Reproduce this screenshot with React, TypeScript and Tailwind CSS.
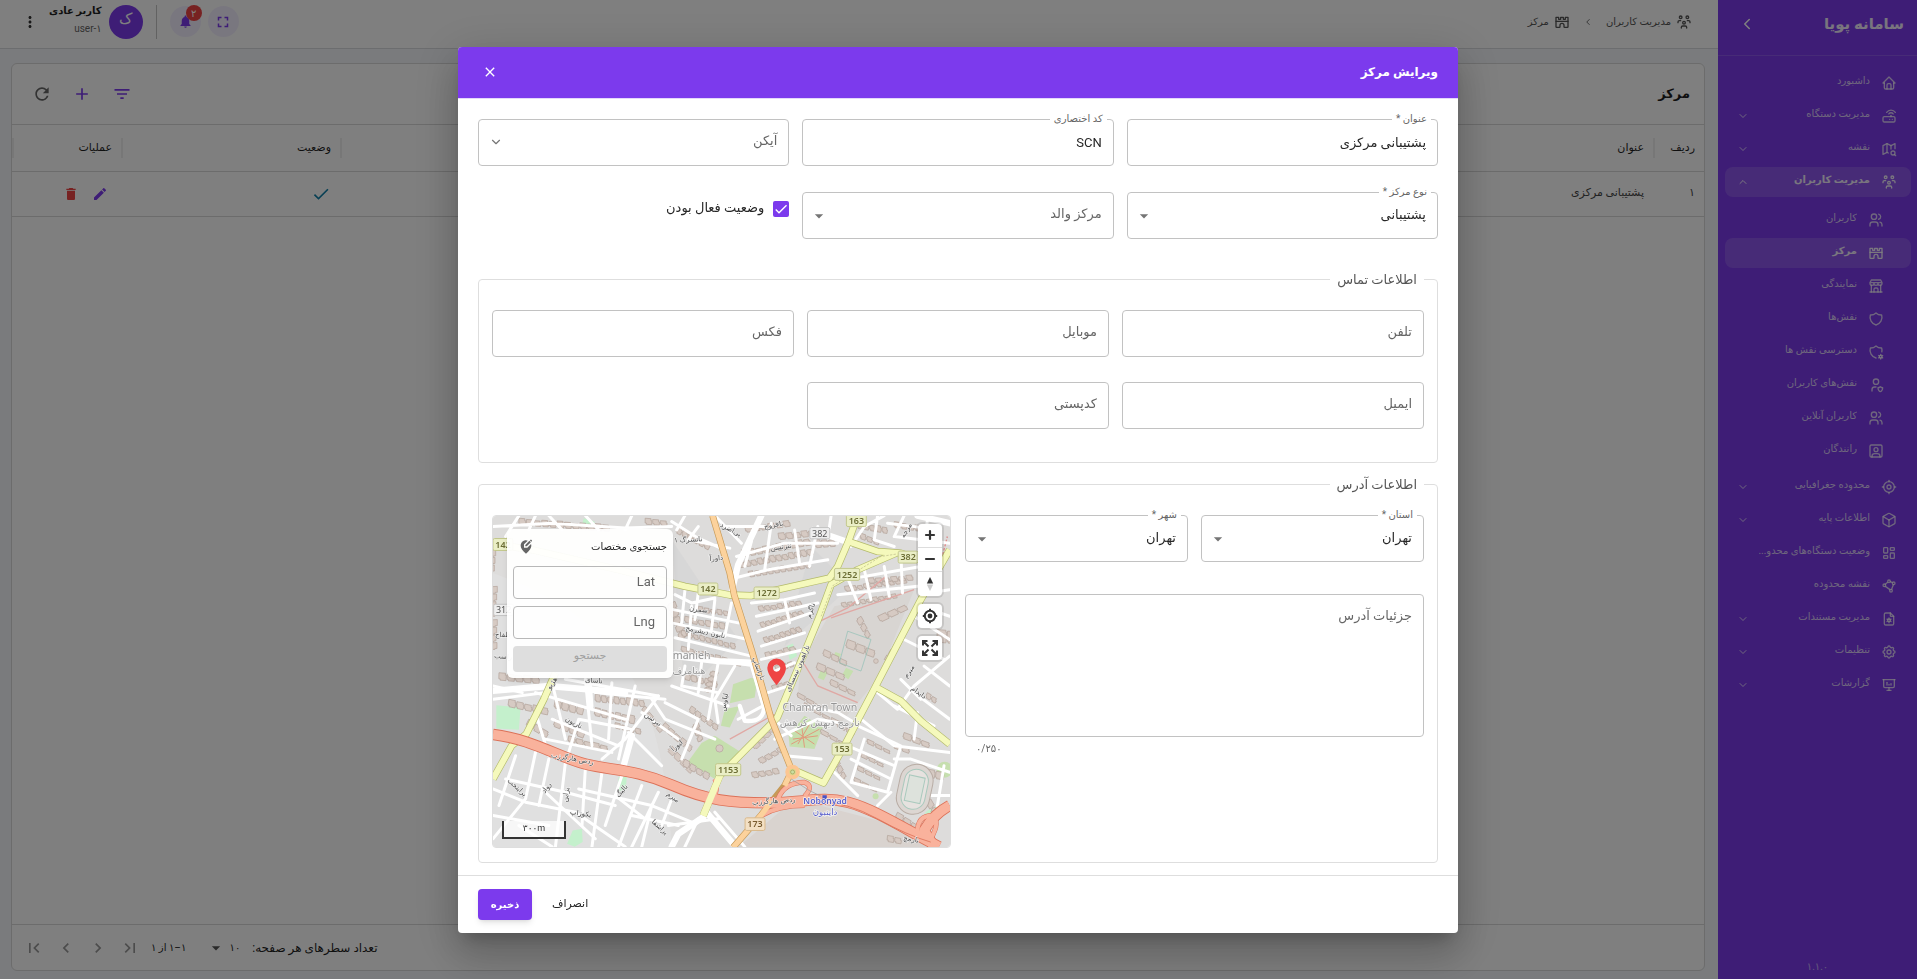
import { useId, type ComponentType, type ReactNode } from "react";
import {
  TbBuildingCastle,
  TbBuildingStore,
  TbChevronDown,
  TbChevronLeft,
  TbChevronUp,
  TbCube,
  TbCurrentLocation,
  TbFileSettings,
  TbHome,
  TbLayoutDashboard,
  TbMapSearch,
  TbPolygon,
  TbPresentationAnalytics,
  TbRouter,
  TbSettings,
  TbShield,
  TbShieldCog,
  TbUserShield,
  TbUserSquare,
  TbUsers,
  TbUsersGroup,
} from "react-icons/tb";
import {
  MdAdd,
  MdArrowDropDown,
  MdCheck,
  MdChevronLeft,
  MdChevronRight,
  MdClose,
  MdDelete,
  MdEdit,
  MdEditLocationAlt,
  MdFilterList,
  MdFirstPage,
  MdFullscreen,
  MdLastPage,
  MdMoreVert,
  MdNotifications,
  MdRefresh,
} from "react-icons/md";

type IconType = ComponentType<{ className?: string }>;

/* ---------- Sidebar ---------- */

type NavEntry = { label: string; icon: IconType; arrow?: boolean };

const topNav: NavEntry[] = [
  { label: "داشبورد", icon: TbHome },
  { label: "مدیریت دستگاه", icon: TbRouter, arrow: true },
  { label: "نقشه", icon: TbMapSearch, arrow: true },
];

const userNav: NavEntry[] = [
  { label: "کاربران", icon: TbUsers },
  { label: "مرکز", icon: TbBuildingCastle },
  { label: "نمایندگی", icon: TbBuildingStore },
  { label: "نقش‌ها", icon: TbShield },
  { label: "دسترسی نقش ها", icon: TbShieldCog },
  { label: "نقش‌های کاربران", icon: TbUserShield },
  { label: "کاربران آنلاین", icon: TbUsers },
  { label: "رانندگان", icon: TbUserSquare },
];

const bottomNav: NavEntry[] = [
  { label: "محدوده جغرافیایی", icon: TbCurrentLocation, arrow: true },
  { label: "اطلاعات پایه", icon: TbCube, arrow: true },
  { label: "وضعیت دستگاه‌های محدو...", icon: TbLayoutDashboard },
  { label: "نقشه محدوده", icon: TbPolygon },
  { label: "مدیریت مستندات", icon: TbFileSettings, arrow: true },
  { label: "تنظیمات", icon: TbSettings, arrow: true },
  { label: "گزارشات", icon: TbPresentationAnalytics, arrow: true },
];

function NavItem({ entry, nested, active, open }: { entry: NavEntry; nested?: boolean; active?: boolean; open?: boolean }) {
  const Icon = entry.icon;
  return (
    <li>
      <a
        href="#"
        className={`flex h-[30px] items-center gap-[11px] rounded-lg pl-3 ${nested ? "pr-[27px]" : "pr-[14px]"} ${
          active || open ? "bg-white/15 font-bold text-white/90" : "text-white/75"
        }`}
      >
        <Icon className="size-4 shrink-0" />
        <span className="min-w-0 flex-1 truncate pb-1 text-[10px] leading-5">{entry.label}</span>
        {entry.arrow && (open ? <TbChevronUp className="size-3 shrink-0" /> : <TbChevronDown className="size-3 shrink-0" />)}
      </a>
    </li>
  );
}

function Sidebar() {
  return (
    <aside className="flex w-[199px] shrink-0 flex-col bg-[#7c3aed] text-white">
      <div className="flex h-14 items-start justify-between border-b border-white/15 pt-3 pr-[13px] pl-5">
        <span className="text-[15px] leading-6 font-bold text-white/90">سامانه پویا</span>
        <button type="button" aria-label="بستن منو" className="flex h-6 items-center">
          <TbChevronLeft className="size-[18px]" />
        </button>
      </div>
      <nav className="flex flex-1 flex-col pt-3 pr-[6px] pl-[7px]">
        <ul className="flex flex-col gap-[3px]">
          {topNav.map((e) => (
            <NavItem key={e.label} entry={e} />
          ))}
          <NavItem entry={{ label: "مدیریت کاربران", icon: TbUsersGroup, arrow: true }} open />
        </ul>
        <ul className="flex flex-col gap-[3px] pt-2 pb-[6px]">
          {userNav.map((e) => (
            <NavItem key={e.label} entry={e} nested active={e.label === "مرکز"} />
          ))}
        </ul>
        <ul className="flex flex-col gap-[3px]">
          {bottomNav.map((e) => (
            <NavItem key={e.label} entry={e} />
          ))}
        </ul>
      </nav>
      <p className="pb-1 text-center text-[10px] leading-4 text-white/60">۱.۱.۰</p>
    </aside>
  );
}

/* ---------- Page behind the dialog ---------- */

function TopBar() {
  return (
    <header className="flex h-[49px] shrink-0 items-start justify-between border-b border-[#d8dade] bg-white pr-[26px] pl-[21px]">
      <nav className="flex h-[43px] items-center text-[10px] text-[#555]">
        <a href="#" className="flex items-center gap-[5px]">
          <TbUsersGroup className="size-4" />
          <span>مدیریت کاربران</span>
        </a>
        <TbChevronLeft className="mx-[13px] size-[10px]" />
        <a href="#" className="flex items-center gap-[5px]">
          <TbBuildingCastle className="size-4" />
          <span>مرکز</span>
        </a>
      </nav>
      <div className="flex h-[43px] items-center">
        <button type="button" aria-label="تمام صفحه" className="flex size-[31px] items-center justify-center rounded-full bg-[#f3effe] text-[#7c3aed]">
          <MdFullscreen className="size-[18px]" />
        </button>
        <button type="button" aria-label="اعلان‌ها" className="relative mr-[7px] flex size-[31px] items-center justify-center rounded-full bg-[#f3effe] text-[#7c3aed]">
          <MdNotifications className="size-[15px]" />
          <span className="absolute -top-px -right-px flex size-4 items-center justify-center rounded-full bg-[#ef4444] text-[10px] text-white">۲</span>
        </button>
        <div className="mx-[13px] h-[34px] w-px bg-[#c4c4c4]" />
        <div className="flex size-[34px] items-center justify-center rounded-full bg-[#7c3aed] pb-1 text-[15px] text-white">ک</div>
        <div className="mr-[7px] ml-[10px] flex flex-col gap-[2px] pb-[3px]">
          <span className="text-[10px] leading-4 font-bold text-[#1f1f1f]">کاربر عادی</span>
          <span className="text-[10px] leading-4 text-[#666]" dir="ltr">
            <span className="block text-right">user-۱</span>
          </span>
        </div>
        <button type="button" aria-label="بیشتر">
          <MdMoreVert className="size-[18px] text-[#333]" />
        </button>
      </div>
    </header>
  );
}

function HeadCell({ children, className }: { children: ReactNode; className: string }) {
  return (
    <th className={`h-[46px] p-0 text-right font-normal ${className}`}>
      <div className="flex h-5 items-center border-l-2 border-[#efefef] pr-[9px]">{children}</div>
    </th>
  );
}

function CenterTable() {
  return (
    <section className="mt-[14px] mr-[13px] mb-2 ml-[11px] flex flex-1 flex-col rounded-md border border-[#d8d8d8] bg-white">
      <div className="flex h-[61px] items-center justify-between border-b border-[#d8d8d8] pr-[14px] pl-5">
        <h1 className="text-[13px] font-bold text-[#1f1f1f]">مرکز</h1>
        <div className="flex gap-5 text-[#7c3aed]">
          <button type="button" aria-label="فیلتر">
            <MdFilterList className="size-5" />
          </button>
          <button type="button" aria-label="افزودن">
            <MdAdd className="size-5" />
          </button>
          <button type="button" aria-label="بازخوانی">
            <MdRefresh className="size-5 text-[#666]" />
          </button>
        </div>
      </div>
      <table className="w-full table-fixed border-collapse text-[11px] text-[#1f1f1f]">
        <thead>
          <tr className="border-b border-[#d8d8d8]">
            <HeadCell className="w-[51px]">ردیف</HeadCell>
            <HeadCell className="">عنوان</HeadCell>
            <HeadCell className="w-[219px]">وضعیت</HeadCell>
            <HeadCell className="w-[109px]">عملیات</HeadCell>
          </tr>
        </thead>
        <tbody>
          <tr className="border-b border-[#d8d8d8] text-[#444]">
            <td className="h-[45px] p-0 pr-[9px]">۱</td>
            <td className="p-0 pr-[9px]">پشتیبانی مرکزی</td>
            <td className="p-0 pr-[9px]">
              <MdCheck className="size-5 text-[#0e7fa8]" />
            </td>
            <td className="p-0 pr-[13px]">
              <div className="flex gap-[13px]">
                <button type="button" aria-label="ویرایش">
                  <MdEdit className="size-4 text-[#7c3aed]" />
                </button>
                <button type="button" aria-label="حذف">
                  <MdDelete className="size-4 text-[#ef4444]" />
                </button>
              </div>
            </td>
          </tr>
        </tbody>
      </table>
      <div className="mt-auto flex h-[46px] items-center justify-end border-t border-[#d8d8d8] pl-3 text-[10px] text-[#1f1f1f]">
        <label htmlFor="page-size" className="text-[12px]">
          تعداد سطرهای هر صفحه:
        </label>
        <div className="mr-3 flex items-center">
          <select id="page-size" defaultValue="10" className="w-[14px] appearance-none text-right outline-none">
            <option value="10">۱۰</option>
            <option value="25">۲۵</option>
          </select>
          <MdArrowDropDown className="size-5 text-[#555]" />
        </div>
        <span className="mr-5">۱–۱ از ۱</span>
        <div className="mr-[11px] flex gap-3 text-[#999]">
          <button type="button" aria-label="صفحه اول" disabled>
            <MdLastPage className="size-5" />
          </button>
          <button type="button" aria-label="صفحه قبل" disabled>
            <MdChevronRight className="size-5" />
          </button>
          <button type="button" aria-label="صفحه بعد" disabled>
            <MdChevronLeft className="size-5" />
          </button>
          <button type="button" aria-label="صفحه آخر" disabled>
            <MdFirstPage className="size-5" />
          </button>
        </div>
      </div>
    </section>
  );
}

/* ---------- Form fields ---------- */

const boxClass = "w-full appearance-none rounded border border-[#c2c2c2] bg-transparent px-[11px] text-right text-[13px] text-[#262626] outline-none";

function FieldLabel({ id, label, floated }: { id: string; label: string; floated: boolean }) {
  return (
    <label
      htmlFor={id}
      className={
        floated
          ? "absolute -top-2 right-[7px] bg-white px-1 text-[10px] leading-4 text-[#666]"
          : "pointer-events-none absolute top-3 right-3 text-[13px] leading-5 text-[#666]"
      }
    >
      {label}
    </label>
  );
}

function TextField({ label, value = "" }: { label: string; value?: string }) {
  const id = useId();
  return (
    <div className="relative">
      <input id={id} type="text" defaultValue={value} className={`h-[47px] ${boxClass}`} />
      <FieldLabel id={id} label={label} floated={value !== ""} />
    </div>
  );
}

function SelectField({ label, value = "", chevron }: { label: string; value?: string; chevron?: boolean }) {
  const id = useId();
  return (
    <div className="relative">
      <select id={id} defaultValue={value} className={`h-[47px] ${boxClass}`}>
        <option value={value}>{value}</option>
      </select>
      <FieldLabel id={id} label={label} floated={value !== ""} />
      {chevron ? (
        <TbChevronDown className="pointer-events-none absolute top-4 left-[11px] size-[14px] text-[#757575]" />
      ) : (
        <MdArrowDropDown className="pointer-events-none absolute top-[14px] left-[7px] size-5 text-[#757575]" />
      )}
    </div>
  );
}

function Group({ title, children }: { title: string; children: ReactNode }) {
  return (
    <fieldset className="rounded border border-[#dedede] px-[13px]">
      <legend className="px-[7px] text-[13px] leading-5 text-[#555]">{title}</legend>
      {children}
    </fieldset>
  );
}

/* ---------- Map ---------- */

const minorRoads = [
  "M100 27 L60 90 M150 27 L130 70 M190 27 L230 70 M300 27 L340 70 M440 27 L420 70 M22 60 L200 50 L420 64 L560 60",
  "M560 45 L640 95 L720 130 M600 27 L575 70 M640 60 L610 100 L735 125 M690 27 L770 110 M720 60 L840 60",
  "M750 215 L850 190 L1030 160 M755 150 L900 110 L1060 110 M800 105 L780 180 M860 50 L840 190 M930 70 L945 170 M1040 27 L1030 95 M1000 60 L975 180",
  "M1100 120 L1140 60 L1200 27 M1180 27 L1170 100 L1230 120 M1260 27 L1230 90 L1397 110 M1330 40 L1320 120 M1210 50 L1370 70",
  "M1055 225 L1310 180 M1090 215 L1120 290 M1060 265 L1300 240 M1140 190 L1160 280 M1200 180 L1215 270 M1250 140 L1255 260 M1300 150 L1330 260 L1397 250",
  "M570 265 L620 290 L690 275 M600 250 L590 350 M640 260 L630 340 M565 310 L760 350 M560 350 L790 400 M570 395 L800 450 M690 280 L680 370 M740 290 L720 390 M620 300 L610 430",
  "M800 290 L900 280 L990 260 M815 330 L1000 290 M820 375 L980 320 M830 420 L960 380 M830 460 L960 430 M860 500 L930 470 M850 560 L910 540 M900 280 L915 350",
  "M570 440 L810 480 M600 480 L590 540 L700 560 M650 470 L640 560 M700 470 L670 640 M750 480 L690 580 L700 650 M560 540 L730 600 M800 480 L835 600 L760 640",
  "M22 580 L180 560 M150 560 L420 640 M200 530 L240 700 M300 520 L320 720 M22 540 L110 560 M380 530 L370 700 M450 540 L400 760 M240 520 L520 570 M330 560 L540 580",
  "M520 570 L420 700 L350 760 M540 590 L640 640 L590 760 M470 620 L580 700 M430 680 L530 780 M500 580 L540 640 L690 700 M200 640 L400 720 M180 700 L380 740 M150 620 L190 750",
  "M250 740 L280 640 L440 670 M90 750 L40 900 M150 740 L120 880 L22 1000 M190 760 L160 900 M240 770 L210 1024 M300 790 L290 960 M22 850 L120 890 L270 920 L420 1024",
  "M350 800 L320 1024 M410 810 L360 960 M470 840 L400 1024 M520 860 L440 1024 M60 820 L240 860 L390 900 M22 930 L190 960 M280 850 L500 900 L620 950 M500 900 L470 1024 M560 880 L530 960",
  "M640 940 L600 1024 M690 920 L780 1024 M550 960 L700 940 M180 860 L330 1000 M100 960 L200 1024 M440 930 L580 960 M390 870 L480 940",
  "M870 700 L1000 640 L1060 650 M900 750 L1010 760 M880 650 L920 690 M960 600 L1060 620 L1110 650 M1120 660 L1250 720 L1210 860 L1100 830 L1140 700 M1090 720 L1230 780 M1100 760 L1220 820",
  "M1130 640 L1230 720 L1397 740 M1180 560 L1240 610 L1290 540 L1397 450 M1230 600 L1350 660 M1250 520 L1310 580 M1320 480 L1397 540 M1290 560 L1397 640 M1300 620 L1290 700",
  "M1220 860 L1180 900 M1230 760 L1280 760 L1397 800 M1050 800 L1120 870 M1240 870 L1397 870 M1380 780 L1360 900 M1310 300 L1397 330 M1290 330 L1397 400 M1260 400 L1380 460",
];

const collectorRoads = [
  "M742 250 L760 175 L830 27",
  "M1300 27 L1397 50",
  "M985 70 L1100 110",
  "M22 555 L190 540 L420 560",
  "M310 530 L315 600",
  "M570 450 L700 465 L800 470",
  "M655 935 L580 985 L560 1024 M665 920 L745 1015",
  "M410 800 L440 690",
];

const secondaryRoads = [
  "M22 112 L140 130 L400 190 L600 240 L735 266 L800 268 L1035 215 L1060 180 L1092 105 L1120 27",
  "M1092 105 L1180 135 L1250 140 L1310 160",
  "M1235 140 L1120 190 L1040 235 L1005 330 L935 500 L878 635 L705 810 L655 930",
  "M1397 130 L1310 280 L1172 545 L1080 720 L1017 832 L925 792",
  "M1172 542 L1250 585 L1310 645 L1397 715",
  "M22 820 L78 720 L122 685 L175 580 L210 500",
];

const trunkRoads = [
  "M22 686 C140 700 220 755 300 775 S450 790 560 838 S740 892 850 892 S1010 870 1090 890 S1270 975 1365 1024",
  "M1397 900 Q1350 925 1320 975 L1350 1024",
];

const trunkLinks = ["M690 870 Q700 840 690 820", "M880 880 Q900 830 960 830 Q990 840 960 872", "M830 930 Q880 900 960 900", "M1300 980 Q1300 930 1345 930 Q1370 950 1340 1000"];

/* x, y, angle, count, building width, building height */
const buildingRows: number[][] = [
  [100, 35, 4, 12, 26, 22], [580, 60, 28, 6, 22, 22], [780, 60, -8, 6, 26, 20], [770, 130, -10, 10, 24, 24], [760, 165, -10, 12, 22, 22],
  [790, 195, -9, 10, 22, 20], [880, 80, -6, 5, 26, 22], [990, 100, -4, 3, 24, 26], [1120, 45, 10, 5, 22, 22], [1230, 45, 8, 6, 24, 20], [1130, 80, 20, 3, 24, 18],
  [1080, 240, -8, 10, 22, 18], [1070, 290, -10, 9, 22, 16], [1150, 215, -4, 6, 26, 18], [570, 285, 70, 5, 26, 28], [600, 330, 10, 6, 24, 20],
  [640, 300, 8, 5, 22, 18], [590, 372, 14, 9, 22, 18], [590, 420, 14, 9, 24, 18], [820, 300, -8, 7, 22, 18], [825, 350, -18, 8, 20, 20],
  [835, 395, -18, 7, 20, 20], [840, 440, -14, 5, 22, 22], [870, 480, -20, 3, 22, 22], [860, 540, -20, 3, 22, 20], [600, 500, 14, 5, 24, 22],
  [700, 500, 110, 4, 20, 24], [40, 500, 5, 5, 28, 24], [70, 580, 12, 5, 28, 24], [210, 580, 14, 4, 26, 28], [330, 565, 6, 8, 22, 24],
  [330, 605, 12, 6, 24, 26], [210, 640, 22, 4, 28, 24], [130, 640, 30, 3, 28, 24], [250, 690, 14, 5, 28, 20], [390, 650, 14, 4, 24, 18],
  [480, 600, 50, 4, 26, 20], [540, 650, 40, 5, 26, 22], [560, 720, 45, 4, 28, 22], [600, 760, 30, 4, 26, 22], [620, 600, 35, 5, 24, 20], [640, 650, 70, 3, 22, 22],
  [800, 720, -45, 4, 26, 20], [820, 760, -30, 4, 24, 20], [800, 800, -10, 4, 24, 20], [940, 560, 28, 3, 34, 14], [960, 590, 28, 4, 34, 14],
  [1010, 670, 28, 3, 34, 14], [1060, 650, 28, 2, 34, 14], [1150, 700, 25, 3, 30, 14], [1130, 740, 25, 3, 30, 14], [1120, 780, 25, 3, 30, 14], [1110, 815, 25, 3, 30, 14],
  [1060, 760, 60, 3, 24, 20], [1180, 330, -25, 3, 34, 22], [1130, 330, 60, 3, 26, 20], [1020, 430, 25, 3, 30, 20],
  [1090, 400, 20, 3, 34, 26], [1000, 470, 22, 3, 34, 22], [1040, 520, 25, 3, 32, 18], [1200, 460, -60, 3, 24, 18], [1260, 680, 20, 3, 32, 20], [1230, 710, 20, 2, 30, 18],
  [1360, 370, 5, 2, 34, 40], [1330, 560, 30, 2, 22, 18], [1240, 920, 30, 3, 30, 20], [1330, 790, 10, 2, 30, 26], [1340, 880, 60, 2, 30, 20], [35, 240, 90, 4, 26, 22],
  [35, 340, 90, 4, 26, 22], [30, 130, 90, 3, 26, 22], [480, 35, 4, 3, 26, 20], [1210, 990, 10, 2, 26, 20],
];

const streetNames: [number, number, number, string][] = [
  [735, 75, 28, "یی‌اضر‌د"], [868, 62, -10, "نافروج"], [610, 106, -3, "ناتسرگ ۱"], [890, 128, -8, "نترتسن"], [695, 162, -5, "داورآ"],
  [640, 316, 8, "سمرن"], [660, 384, 12, "نایون دیشرمج"], [985, 315, -72, "ناگرم"], [815, 490, 68, "ناراساپ"], [725, 590, -80, "لیاوس"],
  [945, 490, -66, "ناراهبون نیمساای"], [262, 656, 28, "ناریون"], [500, 645, 35, "نیرسن"], [580, 725, -40, "لیورآ"], [260, 765, 10, "ردص هارگرزب"],
  [90, 850, 42, "یرایتخب"], [188, 850, -55, "رواد"], [248, 868, -82, "یزاین"], [415, 860, -50, "نالیگ"], [285, 930, 8, "یکوزاپ"], [560, 880, 35, "میرم"],
  [520, 970, 42, "یراشفا"], [868, 893, -4, "ردص هارگرزب"], [1280, 500, -55, "میرم"], [1300, 565, 35, "دایدام"], [1280, 1008, 10, "نارمچ"], [325, 530, 4, "ناسای"],
  [52, 458, 5, "راسب"], [52, 392, 0, "ظفاح"], [1272, 75, -60, "مرجه"], [205, 535, -55, "هژیو"],
];

const shields: [number, number, string][] = [
  [669, 248, "142"], [846, 260, "1272"], [1088, 204, "1252"], [1272, 152, "382"], [1116, 42, "163"], [1073, 730, "153"], [730, 792, "1153"], [52, 114, "142"],
];

function BuildingRow({ row }: { row: number[] }) {
  const [x, y, angle, count, w, h] = row;
  return (
    <g transform={`translate(${x} ${y}) rotate(${angle})`}>
      {Array.from({ length: count }, (_, i) => {
        const px = i * (w - 3);
        const dy = (i * 7) % 5;
        return <path key={i} d={`M${px} ${dy} h${w - 8} v6 h3 v${h - 8 - dy} h-${w - 10} v-4 h-4 z`} />;
      })}
    </g>
  );
}

function StreetMap() {
  return (
    <svg viewBox="22 27 1376 999" preserveAspectRatio="xMidYMid slice" className="block size-full" role="img" aria-label="نقشه" direction="ltr">
      <rect x="22" y="27" width="1376" height="999" fill="#dddcdb" />
      <path d="M930 880 L1240 960 L1330 1026 L760 1026 Z" fill="#d9d3cf" />
      <path d="M1050 300 L1290 250 L1180 520 L1070 650 L940 560 L950 470 Z" fill="#d8d5d2" />
      <path d="M22 200 Q300 300 420 480 T560 1026 L22 1026 Z" fill="#e3e2e2" opacity="0.6" />
      <path d="M560 100 L760 400 L600 560 Z M980 120 L1100 240 L900 420 Z" fill="#d4d3d3" opacity="0.6" />

      <g fill="#c6dfae">
        <path d="M745 535 L800 515 L818 520 L810 575 L735 592 Z M720 610 L765 600 L735 665 L708 660 Z" />
        <path d="M690 690 L770 740 L690 820 L608 770 L650 712 Z" />
        <path d="M912 690 L960 630 L1015 665 L990 730 L915 722 Z" />
        <path d="M1012 485 L1032 495 L1018 523 L1000 515 Z M1085 485 L1107 495 L1092 520 L1073 508 Z M1053 438 L1070 444 L1062 460 L1046 455 Z" />
        <circle cx="1382" cy="792" r="24" />
        <circle cx="1174" cy="872" r="9" />
      </g>
      <g fill="#c4f0cc">
        <path d="M32 598 L105 605 L100 672 L32 668 Z M400 815 L425 812 L422 850 L398 858 Z M262 975 L290 970 L292 1010 L268 1024 L245 1015 Z" />
        <path d="M906 420 L925 412 L938 450 L915 462 Z M295 35 L328 45 L325 60 L290 55 Z M1330 915 L1372 895 L1350 925 L1320 925 Z" />
      </g>
      <g fill="none" stroke="#e09a7c" strokeWidth="3">
        <path d="M925 700 L1000 690 M930 675 L990 715 M950 650 L960 725 M975 655 L940 715 M920 715 L1005 670" />
      </g>

      <g fill="#d6cac3" stroke="#b3a39a" strokeWidth="2" strokeLinejoin="round">
        {buildingRows.map((row) => (
          <BuildingRow key={row.join("-")} row={row} />
        ))}
        <circle cx="704" cy="728" r="11" />
        <circle cx="1175" cy="465" r="7" />
      </g>

      <g fill="none" stroke="#8fc0b5" strokeWidth="2">
        <path d="M1090 375 L1160 400 L1130 495 L1065 470 Z M1345 395 L1362 397 L1358 425 L1343 423 Z" />
      </g>
      <path d="M1205 210 L1090 305 L985 355 M1290 250 L1040 335 M950 460 L1000 540 L1120 590 M735 700 L870 625" fill="none" stroke="#e0a8a4" strokeWidth="4" />
      <path d="M1370 170 L1390 90" fill="none" stroke="#d88" strokeWidth="4" strokeDasharray="8 5" />

      <g fill="none" stroke="#ffffff" strokeLinejoin="round" strokeLinecap="round">
        <g strokeWidth="9">
          {minorRoads.map((d) => (
            <path key={d} d={d} />
          ))}
        </g>
        <g strokeWidth="19">
          {collectorRoads.map((d) => (
            <path key={d} d={d} />
          ))}
        </g>
        <path d="M805 485 L838 600 Q840 650 780 645 L765 600" strokeWidth="13" />
      </g>

      <g transform="rotate(12 1292 850)" fill="none">
        <rect x="1242" y="775" width="100" height="152" rx="50" stroke="#b8aca4" strokeWidth="3" fill="#dcd6d2" />
        <rect x="1256" y="790" width="72" height="122" rx="36" stroke="#a9c9bd" strokeWidth="3" fill="#e6e2df" />
        <rect x="1268" y="812" width="48" height="78" stroke="#a9c9bd" strokeWidth="3" fill="#dde2dc" />
      </g>

      <g fill="none" strokeLinejoin="round">
        <g stroke="#b3ba6a" strokeWidth="22">
          {secondaryRoads.map((d) => (
            <path key={d} d={d} />
          ))}
        </g>
        <g stroke="#f5f9bc" strokeWidth="18">
          {secondaryRoads.map((d) => (
            <path key={d} d={d} />
          ))}
        </g>
        <path d="M1235 143 L1190 150 L1120 193 L1045 238 L1010 330" stroke="#b9b98a" strokeWidth="2" strokeDasharray="7 4" />
        <path d="M683 27 L735 200 L748 265 L800 430 L860 640 L922 795 L900 840 L830 928 L745 1026" stroke="#c79a58" strokeWidth="20" />
        <g stroke="#dc7158" strokeWidth="15">
          {trunkLinks.map((d) => (
            <path key={d} d={d} />
          ))}
        </g>
        <g stroke="#dc7158" strokeWidth="34">
          {trunkRoads.map((d) => (
            <path key={d} d={d} />
          ))}
        </g>
        <g stroke="#f9b29c" strokeWidth="29">
          {trunkRoads.map((d) => (
            <path key={d} d={d} />
          ))}
        </g>
        <g stroke="#f9b29c" strokeWidth="12">
          {trunkLinks.map((d) => (
            <path key={d} d={d} />
          ))}
        </g>
        <path d="M1000 888 Q1090 890 1180 940 T1340 1010" stroke="#dc7158" strokeWidth="2.5" />
        <path d="M683 27 L735 200 L748 265 L800 430 L860 640 L922 795 L900 840 M862 885 L830 928 L745 1026" stroke="#fcd29c" strokeWidth="16" />
        <path d="M705 810 L655 930" stroke="#f5f9bc" strokeWidth="20" />
      </g>
      <circle cx="924" cy="799" r="16" fill="#dbd98c" stroke="#fcc691" strokeWidth="12" />
      <circle cx="924" cy="799" r="6" fill="#c9dfa0" stroke="#9a9a5a" strokeWidth="2" />
      <path d="M920 820 L975 855 L1010 872" fill="none" stroke="#9a9a9a" strokeWidth="2" />
      <rect x="1014" y="869" width="13" height="12" fill="#4b52c4" />

      <g fontFamily="'DejaVu Sans', sans-serif" fontSize="21" fill="#4c4c4c" stroke="#f2f2f2" strokeWidth="3" paintOrder="stroke" textAnchor="middle">
        {streetNames.map(([x, y, angle, name]) => (
          <text key={`${x}-${y}`} transform={`translate(${x} ${y}) rotate(${angle})`}>
            {name}
          </text>
        ))}
      </g>

      <g fontFamily="'Noto Sans', 'DejaVu Sans', sans-serif" textAnchor="middle">
        {shields.map(([x, y, text]) => (
          <g key={`${x}-${y}`}>
            <rect x={x - text.length * 8 - 6} y={y - 18} width={text.length * 16 + 12} height="36" rx="5" fill="#eaeec6" stroke="#c3c88c" strokeWidth="3" />
            <text x={x} y={y + 10} fontSize="27" fontWeight="600" fill="#6b6d34">
              {text}
            </text>
          </g>
        ))}
        {(
          [
            [1006, 80, "382"],
            [54, 311, "312"],
          ] as [number, number, string][]
        ).map(([x, y, text]) => (
          <g key={text}>
            <rect x={x - 30} y={y - 17} width="60" height="34" rx="5" fill="#eeeeee" stroke="#c4c4c4" strokeWidth="3" />
            <text x={x} y={y + 10} fontSize="27" fill="#555">
              {text}
            </text>
          </g>
        ))}
        <rect x="781" y="937" width="60" height="38" rx="5" fill="#f3e0c4" stroke="#d9b98c" strokeWidth="3" />
        <text x="811" y="966" fontSize="27" fontWeight="600" fill="#7a5c30">
          173
        </text>
        <g fill="#959595" stroke="#f4f4f4" strokeWidth="4" paintOrder="stroke" fontSize="32">
          <text x="1006" y="615">Chamran Town</text>
          <text x="1006" y="660" fontSize="30">
            نارمچ دیهش کرهش
          </text>
          <text x="620" y="458">manieh</text>
          <text x="612" y="504" fontSize="28">
            هینامرف
          </text>
        </g>
        <g fill="#5a60cc" stroke="#f4f4f4" strokeWidth="4" paintOrder="stroke" fontSize="26">
          <text x="1022" y="896" fontWeight="600">
            Nobonyad
          </text>
          <text x="1022" y="930" fontSize="26">
            داینبون
          </text>
        </g>
      </g>

      <path
        d="M876 538 C862 518 848 503 848 485 A28 28 0 0 1 904 485 C904 503 890 518 876 538 Z M876 475 a11 11 0 1 0 0.1 0 Z"
        fill="#ef4444"
        fillRule="evenodd"
      />
    </svg>
  );
}

function CoordinateField({ label }: { label: string }) {
  const id = useId();
  return (
    <div className="relative">
      <input id={id} type="text" className="h-[33px] w-full rounded border border-[#b8b8b8] bg-transparent px-3 text-[13px] outline-none" />
      <label htmlFor={id} className="pointer-events-none absolute top-[6px] right-3 text-[13px] leading-5 text-[#666]">
        {label}
      </label>
    </div>
  );
}

const mapButton = "flex size-6 items-center justify-center text-[#333]";
const mapButtonCard = "flex flex-col rounded bg-white shadow-[0_0_0_2px_rgba(0,0,0,0.1)]";

function MapPanel() {
  return (
    <div className="relative h-[333px] overflow-hidden rounded border border-[#dedede]">
      <StreetMap />
      <div className="absolute top-[13px] left-[14px] flex w-[166px] flex-col gap-[7px] rounded-md bg-white/95 p-[6px] shadow-md">
        <div className="flex h-6 items-center justify-between pl-[5px]">
          <h2 className="text-[10px] leading-5 font-medium text-[#262626]">جستجوی مختصات</h2>
          <MdEditLocationAlt className="size-4 text-[#666]" />
        </div>
        <CoordinateField label="Lat" />
        <CoordinateField label="Lng" />
        <button type="button" disabled className="h-[26px] rounded bg-[#dedede] pb-1 text-[11px] text-[#a0a0a0]">
          جستجو
        </button>
      </div>
      <div className="absolute top-2 right-2 flex flex-col gap-2">
        <div className={`${mapButtonCard} divide-y divide-[#dddddd]`}>
          <button type="button" aria-label="بزرگنمایی" className={mapButton}>
            <svg viewBox="0 0 24 24" className="size-6" stroke="currentColor" strokeWidth="2.2" strokeLinecap="round">
              <path d="M12 8 V16 M8 12 H16" />
            </svg>
          </button>
          <button type="button" aria-label="کوچکنمایی" className={mapButton}>
            <svg viewBox="0 0 24 24" className="size-6" stroke="currentColor" strokeWidth="2.2" strokeLinecap="round">
              <path d="M8 12 H16" />
            </svg>
          </button>
          <button type="button" aria-label="جهت شمال" className={mapButton}>
            <svg viewBox="0 0 24 24" className="size-6">
              <path d="M12 5 L15.2 11.4 H8.8 Z" fill="#333" />
              <path d="M12 19 L15.2 12.6 H8.8 Z" fill="#ccc" />
            </svg>
          </button>
        </div>
        <div className={mapButtonCard}>
          <button type="button" aria-label="موقعیت من" className={mapButton}>
            <svg viewBox="0 0 24 24" className="size-6" fill="none" stroke="currentColor" strokeWidth="2">
              <circle cx="12" cy="12" r="5.2" />
              <circle cx="12" cy="12" r="2.4" fill="currentColor" stroke="none" />
              <path d="M12 4.8 V7 M12 17 V19.2 M4.8 12 H7 M17 12 H19.2" />
            </svg>
          </button>
        </div>
        <div className={mapButtonCard}>
          <button type="button" aria-label="نمای تمام صفحه" className={mapButton}>
            <svg viewBox="0 0 24 24" className="size-6" fill="none" stroke="currentColor" strokeWidth="2">
              <path d="M5 9.5 V5 H9.5 M14.5 5 H19 V9.5 M19 14.5 V19 H14.5 M9.5 19 H5 V14.5 M5.5 5.5 L10.5 10.5 M18.5 5.5 L13.5 10.5 M18.5 18.5 L13.5 13.5 M5.5 18.5 L10.5 13.5" />
            </svg>
          </button>
        </div>
      </div>
      <div className="absolute bottom-2 left-[9px] flex h-[18px] w-16 items-center justify-center border-2 border-t-0 border-[#333] bg-white/75 text-[9px] text-[#333]" dir="ltr">
        ۳۰۰m
      </div>
    </div>
  );
}

/* ---------- Dialog ---------- */

function EditDialog() {
  const activeId = useId();
  const addressId = useId();
  return (
    <div className="fixed inset-0 flex items-center justify-center bg-black/50 pr-px">
      <div
        role="dialog"
        aria-modal="true"
        aria-label="ویرایش مرکز"
        className="flex w-full max-w-[1000px] flex-col overflow-hidden rounded bg-white shadow-[0_11px_15px_-7px_rgba(0,0,0,0.2),0_24px_38px_3px_rgba(0,0,0,0.14),0_9px_46px_8px_rgba(0,0,0,0.12)]"
      >
        <div className="flex h-[51px] items-center justify-between bg-[#7c3aed] pr-5 pl-6 text-white">
          <h2 className="text-[12px] font-bold">ویرایش مرکز</h2>
          <button type="button" aria-label="بستن">
            <MdClose className="size-4" />
          </button>
        </div>

        <div className="flex flex-col border-t border-[#e4d8fb] px-5 pt-5 pb-3">
          <div className="grid grid-cols-3 gap-x-[13px] gap-y-[26px] pb-[31px]">
            <TextField label="عنوان *" value="پشتیبانی مرکزی" />
            <TextField label="کد اختصاری" value="SCN" />
            <SelectField label="آیکن" chevron />
            <SelectField label="نوع مرکز *" value="پشتیبانی" />
            <SelectField label="مرکز والد" />
            <div className="flex items-start pt-2">
              <span className="relative mt-px flex size-4">
                <input id={activeId} type="checkbox" defaultChecked className="size-4 appearance-none rounded-xs bg-[#7c3aed]" />
                <MdCheck className="pointer-events-none absolute inset-0 size-4 text-white" />
              </span>
              <label htmlFor={activeId} className="mr-[9px] text-[13px] leading-4 text-[#262626]">
                وضعیت فعال بودن
              </label>
            </div>
          </div>

          <Group title="اطلاعات تماس">
            <div className="grid grid-cols-3 gap-x-[13px] gap-y-[25px] pt-5 pb-[33px]">
              <TextField label="تلفن" />
              <TextField label="موبایل" />
              <TextField label="فکس" />
              <TextField label="ایمیل" />
              <TextField label="کدپستی" />
            </div>
          </Group>

          <div className="mt-3">
            <Group title="اطلاعات آدرس">
              <div className="grid grid-cols-2 gap-x-[14px] pt-5 pb-[14px]">
                <div className="flex flex-col">
                  <div className="grid grid-cols-2 gap-x-[13px] pb-8">
                    <SelectField label="استان *" value="تهران" />
                    <SelectField label="شهر *" value="تهران" />
                  </div>
                  <div className="relative flex">
                    <textarea id={addressId} className={`h-[143px] resize-none py-3 ${boxClass}`} />
                    <FieldLabel id={addressId} label="جزئیات آدرس" floated={false} />
                  </div>
                  <p className="pt-1 pl-[11px] text-left text-[10px] leading-4 text-[#666]" dir="ltr">
                    ۰/۲۵۰
                  </p>
                </div>
                <MapPanel />
              </div>
            </Group>
          </div>
        </div>

        <div className="flex h-[58px] items-center justify-end gap-[6px] border-t border-[#dedede] px-5">
          <button type="button" className="h-8 px-[14px] text-[11px] text-[#262626]">
            انصراف
          </button>
          <button type="button" className="h-[31px] w-[54px] rounded bg-[#7c3aed] text-[10px] font-bold text-white shadow-md">
            ذخیره
          </button>
        </div>
      </div>
    </div>
  );
}

export default function App() {
  return (
    <div dir="rtl" className="flex h-screen overflow-hidden bg-[#f5f7fb] font-[Roboto,'DejaVu_Sans',sans-serif]">
      <Sidebar />
      <main className="flex min-w-0 flex-1 flex-col">
        <TopBar />
        <CenterTable />
      </main>
      <EditDialog />
    </div>
  );
}
